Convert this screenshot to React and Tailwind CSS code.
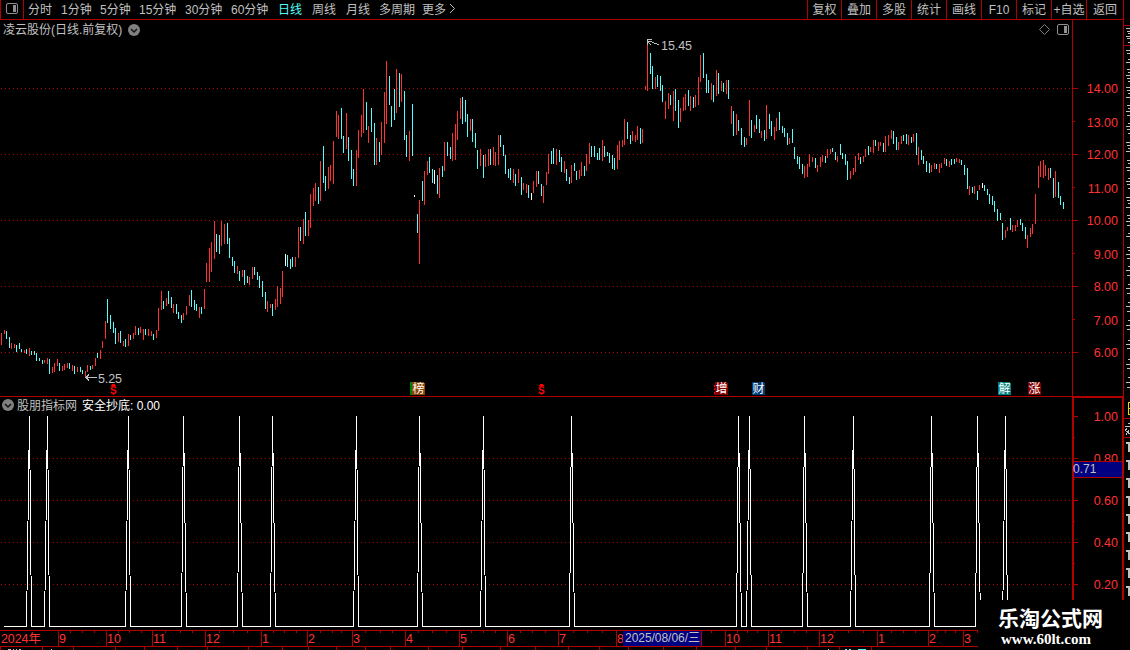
import React from "react";

const RED = "#b00000";

const COLORS = { r: "#ff3232", c: "#54fcfc", w: "#ffffff" };

// x, high, low, direction
const BARS = `1 333 345 r,4 330 334 r,6 331 339 c,9 337 348 c,11 343 349 r,14 344 348 r,16 345 352 c,19 343 349 c,21 349 352 c,24 350 353 r,26 349 354 c,29 348 356 r,31 351 355 c,34 351 355 c,36 353 361 c,39 358 361 c,42 360 364 c,44 360 363 r,47 358 364 r,49 359 374 c,52 367 373 r,54 363 372 r,57 359 366 r,59 363 371 c,62 366 371 r,64 364 370 r,67 363 368 r,69 363 369 c,72 365 371 r,74 366 374 c,77 367 372 r,80 367 372 c,82 370 374 c,85 371 377 r,87 365 372 r,90 366 370 c,92 365 369 r,95 358 366 r,97 353 358 c,100 350 359 r,102 341 348 r,105 321 339 r,107 299 323 c,110 315 329 c,113 322 333 c,115 328 344 c,118 333 342 r,120 331 343 c,123 341 346 r,125 339 347 c,128 334 346 r,130 335 340 c,133 333 339 r,135 326 335 r,138 328 335 c,140 327 333 r,143 329 340 r,145 329 335 c,148 329 336 r,151 331 336 r,153 334 340 c,156 330 338 r,158 308 331 r,161 291 310 r,163 301 309 c,166 298 306 r,168 291 304 c,171 297 308 c,173 304 313 r,176 304 314 c,178 312 319 c,181 315 323 c,183 313 320 r,186 306 315 r,189 295 306 r,191 290 307 c,194 300 310 c,196 304 311 c,199 307 318 r,201 307 314 c,204 289 309 r,206 263 282 r,209 248 282 r,211 242 272 r,214 221 259 r,216 234 252 c,219 235 254 c,221 221 246 r,224 224 244 r,227 223 244 c,229 238 258 c,232 257 266 c,234 261 273 c,237 266 274 r,239 271 281 c,242 270 277 r,244 270 285 c,247 276 283 c,249 277 285 r,252 267 279 r,254 267 275 c,257 272 280 c,259 276 288 c,262 281 297 c,265 292 309 c,267 301 312 r,270 304 308 r,272 304 316 c,275 299 310 r,277 286 307 r,280 288 304 r,282 271 297 r,285 254 266 w,287 255 267 c,290 259 269 c,292 257 267 c,295 257 267 r,298 227 258 r,300 227 241 c,303 219 244 r,305 212 236 c,308 220 236 r,310 194 228 r,313 188 206 r,315 183 201 r,318 187 204 c,320 161 201 r,323 146 183 c,325 176 191 c,328 167 189 r,330 165 181 r,333 141 184 r,336 111 137 r,338 115 139 r,341 108 139 c,343 136 153 c,346 113 149 r,348 137 161 c,351 150 179 c,353 169 186 c,356 150 186 r,358 130 158 r,361 115 137 r,363 89 133 r,366 102 130 c,368 126 143 r,371 108 132 c,374 123 165 c,376 138 165 r,379 142 162 c,381 122 155 r,384 92 143 r,386 61 124 r,389 76 105 c,391 106 127 c,394 89 120 c,396 69 113 r,399 73 107 c,401 74 102 r,404 91 140 c,406 135 157 c,409 131 161 r,412 104 156 c,414 195 197 w,417 214 233 c,419 200 264 r,422 181 201 c,424 171 205 r,427 161 175 r,429 157 173 c,432 169 183 c,434 170 184 w,437 175 194 c,439 168 198 r,442 166 177 c,444 142 171 r,447 142 156 c,450 147 159 c,452 133 161 r,455 124 160 r,457 111 140 r,460 98 119 r,462 97 124 c,465 100 122 c,467 114 137 c,470 119 131 r,472 119 142 c,475 133 148 c,477 150 169 c,480 149 166 r,483 155 178 c,485 154 167 r,488 149 166 r,490 149 165 c,493 147 165 r,495 152 166 r,498 135 165 r,500 135 147 c,503 145 156 c,505 155 174 c,508 169 178 c,510 168 180 c,513 169 183 r,515 174 186 c,518 169 183 r,521 177 195 c,523 183 190 r,526 184 193 r,528 185 198 c,531 193 200 w,533 181 193 r,536 171 187 r,538 171 184 c,541 184 196 c,543 186 203 r,546 172 185 r,548 154 174 r,551 151 164 c,553 148 164 c,556 149 165 r,559 150 162 c,561 157 172 c,564 161 173 r,566 169 181 c,569 177 184 c,571 165 183 r,574 163 171 c,576 171 180 c,579 170 179 r,581 162 176 r,584 166 176 c,586 154 171 r,589 143 164 r,591 146 157 c,594 146 157 c,597 153 160 c,599 148 160 c,602 140 161 r,604 146 157 c,607 152 156 c,609 153 163 c,612 155 169 c,614 158 170 c,617 145 169 r,619 141 160 r,622 140 147 r,624 119 145 r,627 122 139 c,630 135 144 c,632 131 141 r,635 135 142 r,637 126 140 r,640 128 144 c,642 129 143 r,645 86 90 r,647 43 91 r,650 53 74 c,652 66 89 c,655 77 89 r,657 75 87 c,660 76 91 c,662 85 102 c,665 101 119 r,668 93 109 r,670 95 105 c,673 91 121 r,675 89 111 c,678 100 128 c,680 108 122 r,683 97 111 r,685 94 110 r,688 90 106 c,690 96 111 r,693 97 108 c,695 95 107 r,698 77 105 r,700 55 82 r,703 53 78 c,706 74 93 c,708 80 93 c,711 83 100 r,713 85 102 c,716 70 96 r,718 73 94 c,721 81 91 r,723 83 92 c,726 80 94 r,728 80 99 c,731 106 124 r,733 111 136 c,736 114 135 r,738 120 131 c,741 128 145 c,744 137 147 c,746 138 145 r,749 100 136 r,751 120 138 c,754 125 132 r,756 115 129 c,759 119 133 c,761 131 138 r,764 130 141 c,766 105 139 r,769 114 129 c,771 121 136 c,774 127 140 r,776 118 131 r,779 112 130 c,782 126 133 c,784 128 137 c,787 133 145 c,789 138 144 r,792 129 143 c,794 147 159 c,797 156 164 c,799 157 169 c,802 164 174 c,804 166 178 r,807 164 177 r,809 154 167 r,812 157 162 r,815 158 168 c,817 165 172 r,820 157 167 r,822 155 162 r,825 156 163 c,827 149 158 r,830 149 154 r,832 148 152 c,835 152 160 c,837 156 162 r,840 144 155 c,842 153 159 c,845 154 165 c,847 161 180 c,850 171 179 r,853 168 175 r,855 156 172 r,858 153 160 r,860 157 164 c,863 156 162 r,865 149 157 r,868 146 155 c,870 147 152 r,873 140 153 r,875 140 146 c,878 142 151 r,880 142 146 r,883 143 152 c,885 136 152 r,888 135 146 r,891 130 139 r,893 131 144 c,896 137 150 c,898 142 150 r,901 136 144 r,903 135 141 c,906 134 144 c,908 135 145 r,911 137 143 c,913 134 142 r,916 133 155 c,918 147 165 r,921 150 160 c,923 156 164 c,926 161 172 c,929 163 173 c,931 165 172 r,934 163 169 r,936 164 169 c,939 164 173 r,941 163 168 r,944 158 164 r,946 159 166 c,949 161 167 r,951 159 165 c,954 159 164 c,956 158 162 r,959 159 163 r,961 160 165 c,964 165 175 c,967 168 189 c,969 186 195 r,972 187 193 c,974 186 194 r,977 191 200 c,979 185 190 r,982 183 188 w,984 185 191 c,987 189 195 c,989 194 204 c,992 196 205 c,994 201 212 c,997 209 221 c,1000 213 220 c,1002 223 240 c,1005 230 238 r,1007 227 231 r,1010 218 230 c,1012 225 232 r,1015 225 231 r,1017 220 227 r,1020 219 225 c,1022 223 231 c,1025 227 239 c,1027 235 248 r,1030 228 237 r,1032 224 234 r,1035 194 224 r,1038 166 188 r,1040 161 177 r,1043 160 178 r,1045 165 176 r,1048 168 180 r,1050 168 178 c,1053 178 198 c,1055 171 197 r,1058 182 198 c,1060 196 205 c,1063 202 209 c`
  .split(",")
  .map((row) => row.split(" "));

const PERIODS = [
  { label: "分时", cls: "w-[33px]" },
  { label: "1分钟", cls: "w-[39px]" },
  { label: "5分钟", cls: "w-[39px]" },
  { label: "15分钟", cls: "w-[46px]" },
  { label: "30分钟", cls: "w-[46px]" },
  { label: "60分钟", cls: "w-[47px]" },
  { label: "日线", cls: "w-[34px] text-[#54fcfc]" },
  { label: "周线", cls: "w-[34px]" },
  { label: "月线", cls: "w-[33px]" },
  { label: "多周期", cls: "w-[43px]" },
  { label: "更多", cls: "w-[27px]" },
];

const TOOLS = [
  { label: "复权", cls: "w-[34px]" },
  { label: "叠加", cls: "w-[35px]" },
  { label: "多股", cls: "w-[35px]" },
  { label: "统计", cls: "w-[35px]" },
  { label: "画线", cls: "w-[35px]" },
  { label: "F10", cls: "w-[35px]" },
  { label: "标记", cls: "w-[35px]" },
  { label: "+自选", cls: "w-[35px]" },
  { label: "返回", cls: "w-[37px]" },
];

const PRICES = [14, 13, 12, 11, 10, 9, 8, 7, 6];
const LEVELS = ["1.00", "0.80", "0.60", "0.40", "0.20"];

// left foot, peak, right foot of every signal
const SIGNALS = [
  [26, 29, 31], [44, 47, 49], [125, 128, 130], [181, 183, 186], [237, 239, 242],
  [270, 272, 275], [353, 356, 358], [417, 419, 422], [480, 483, 485], [569, 571, 574],
  [736, 738, 741], [746, 749, 751], [802, 804, 807], [850, 853, 855], [929, 931, 934],
  [975, 977, 980], [1002, 1005, 1007],
];

const MONTHS = [
  [58, "9"], [106, "10"], [152, "11"], [205, "12"], [261, "1"], [307, "2"], [352, "3"],
  [405, "4"], [459, "5"], [507, "6"], [558, "7"], [616, "8"], [725, "10"], [768, "11"],
  [819, "12"], [877, "1"], [928, "2"], [963, "3"],
];

const MINOR = [
  70, 82, 94, 118, 129, 141, 165, 180, 192, 219, 233, 247, 273, 284, 296, 320, 332, 341,
  365, 380, 392, 418, 432, 446, 471, 483, 495, 520, 532, 545, 573, 587, 602, 711, 737, 747, 757,
  781, 794, 806, 834, 848, 863, 891, 903, 915, 937, 945, 955, 977,
];

const LOWER_TICKS = [
  0, 42, 73, 115, 144, 177, 207, 248, 282, 308, 336, 365, 390, 428, 462, 500, 535, 568, 599,
  628, 663, 696, 735, 766, 807, 839, 871,
];

const BADGES = [
  [412, "榜", "#8a4600"],
  [715, "增", "#800000"],
  [752, "财", "#003c78"],
  [998, "解", "#008080"],
  [1028, "涨", "#800000"],
];

// strokes of the quote rows: y, start x
const EDGE_STROKES = [
  28, 31, 33, 36, 38, 42, 50, 53, 59, 62, 69, 72, 75, 78, 81, 87, 90, 93, 97, 105, 108, 111, 115,
  123, 126, 129, 133, 142, 145, 148, 151, 160, 163, 167, 170, 178, 181, 184, 188, 197, 200, 203,
  207, 215, 218, 221, 225, 233, 236, 247, 250, 254, 258, 266, 270, 275, 284, 288, 293, 302, 306,
  311, 320, 325, 329, 340, 344, 348, 359, 364, 368, 377, 382, 387,
];

function Grid({ rows }) {
  return rows.map((y) => (
    <line key={y} x1="1" x2="1072" y1={y + 0.5} y2={y + 0.5} stroke={RED} strokeDasharray="1 3" />
  ));
}

function Chevron() {
  return (
    <svg width="12" height="12" viewBox="0 0 12 12">
      <circle cx="6" cy="6" r="6" fill="#808080" />
      <path d="M3 5l3 3 3-3" fill="none" stroke="#111" strokeWidth="1.5" />
    </svg>
  );
}

function PanelIcon() {
  return (
    <svg width="12" height="11" viewBox="0 0 12 11">
      <rect x="0.5" y="0.5" width="11" height="10" rx="1.5" fill="none" stroke="#909090" />
      <rect x="7" y="2" width="3" height="7" fill="#909090" />
    </svg>
  );
}

function Toolbar() {
  return (
    <header className="flex h-5 w-[1124px] shrink-0 border-b border-[#b00000] text-[12px] leading-[20px] whitespace-nowrap">
      <div className="flex w-6 shrink-0 items-center justify-center border-x border-[#b00000] pr-px pb-[2px]">
        <PanelIcon />
      </div>
      <nav className="flex flex-1 pl-1">
        {PERIODS.map((p) => (
          <span key={p.label} className={p.cls}>{p.label}</span>
        ))}
        <svg width="7" height="19" viewBox="0 0 7 19">
          <path d="M1 4l4.5 4.5L1 13" fill="none" stroke="#c0c0c0" />
        </svg>
      </nav>
      <nav className="flex">
        {TOOLS.map((t) => (
          <span key={t.label} className={`${t.cls} flex justify-center border-l border-[#b00000]`}>{t.label}</span>
        ))}
      </nav>
      <div className="w-px bg-[#b00000]" />
    </header>
  );
}

function Dollar({ x }) {
  return (
    <g fill="#ff0000">
      <path d={`M${x - 2} 386h5v-1h-1v-1h-3v1h-1zM${x} 386h1v1h-1zM${x} 394h1v1h-1z`} />
      <text x={x - 3} y="394" fontSize="10" fontWeight="bold">S</text>
    </g>
  );
}

function PricePane() {
  return (
    <section className="relative h-[377px]">
      <svg width="1124" height="377" viewBox="0 20 1124 377" className="block" shapeRendering="crispEdges">
        <Grid rows={[88, 154, 220, 286, 352]} />
        {BARS.map(([x, top, bottom, c]) => (
          <rect key={x} x={x} y={top} width="1" height={bottom - top} fill={COLORS[c]} />
        ))}

        <g fill="none" stroke="#c0c0c0">
          <path d="M85 377.5h12M89 374.5l-3 3 3 3" />
          <path d="M647.5 45v-5.5h4M648 41.5l4 .5 7 3M648 42l3 3" />
        </g>
        <g fill="#c0c0c0" fontSize="12.5">
          <text x="98" y="383" textLength="24">5.25</text>
          <text x="661" y="50" textLength="31">15.45</text>
        </g>

        <Dollar x={113} />
        <Dollar x={541} />
        <path d="M714 385h1v2h-1zM714 388h1v2h-1zM714 392h1v2h-1z" fill="#ff0000" />
        <rect x="410" y="382" width="3" height="13" fill="#008000" />
        {BADGES.map(([x, label, fill]) => (
          <g key={label}>
            <path d={`M${x} 382h12v1h1v12h-13z`} fill={fill} />
            <text x={x + 0.5} y="393" fontSize="12" fill="#fff">{label}</text>
          </g>
        ))}

        <path d="M0 396.5H1124M1072.5 20V397M1123.5 20V397" stroke={RED} />
        {PRICES.map((p, i) => (
          <g key={p}>
            <rect x="1073" y={88 + i * 33} width={i % 2 ? 2 : 5} height="1" fill={RED} />
            <text x="1118" y={93 + i * 33 + (i % 2)} textAnchor="end" fontSize="12.5" fill="#ff3232">{p.toFixed(2)}</text>
          </g>
        ))}
      </svg>
      <div className="absolute top-[1px] left-[3px] flex h-[18px] items-center gap-[6px] text-[12px]">
        <span>凌云股份(日线.前复权)</span>
        <Chevron />
      </div>
      <div className="absolute top-[4px] left-[1039px] flex items-center gap-[7px]">
        <svg width="11" height="11" viewBox="0 0 11 11">
          <path d="M5.5.5l5 5-5 5-5-5z" fill="none" stroke="#808080" />
        </svg>
        <PanelIcon />
      </div>
    </section>
  );
}

function SignalPane() {
  const line = SIGNALS.filter(([l]) => l < 1000)
    .map(([l, x, r]) => `L${l + 0.5} 626.5L${x + 0.5} 416L${r + 0.5} 626.5`)
    .join("");
  return (
    <section className="relative h-[233px]">
      <svg width="1124" height="233" viewBox="0 397 1124 233" className="block" shapeRendering="crispEdges">
        <Grid rows={[458, 500, 542, 584]} />
        <path d={`M4 626.5${line}L1002.5 626.5L1005.5 416L1007.5 626.5`} fill="none" stroke="#fff" strokeLinejoin="bevel" />
        <path d="M1072 397.5H1124" stroke={RED} />
        <path d="M1073 397V600M1123 397V600" stroke={RED} strokeWidth="2" />
        {LEVELS.map((v, i) => (
          <g key={v}>
            <rect x="1074" y={416 + i * 42} width="4" height="1" fill={RED} />
            <rect x="1074" y={437 + i * 42} width="1" height="1" fill={RED} />
            <text x="1118" y={421 + i * 42} textAnchor="end" fontSize="12.5" fill="#ff3232">{v}</text>
          </g>
        ))}
        <rect x="1074" y="461.5" width="48" height="16" fill="#000080" />
        <path d="M1073 461.5h50M1073 477.5h50" stroke={RED} />
        <text x="1073" y="473" fontSize="12" fill="#c0c0c0">0.71</text>
      </svg>
      <div className="absolute top-0 left-[2px] flex h-4 items-center text-[12px]">
        <Chevron />
        <span className="mt-px ml-[3px]">股朋指标网</span>
        <span className="mt-px ml-[5px] text-white">安全抄底: 0.00</span>
      </div>
    </section>
  );
}

function Timeline() {
  return (
    <svg width="1124" height="20" viewBox="0 630 1124 20" className="block" shapeRendering="crispEdges">
      <path d="M0 630.5H1124M0 646.5H1124" stroke={RED} />
      {MINOR.map((x) => (
        <rect key={x} x={x} y="631" width="1" height="2" fill={RED} />
      ))}
      {LOWER_TICKS.map((x) => (
        <rect key={x} x={x} y="647" width="1" height="3" fill={RED} />
      ))}
      <g fill="#ff3232" fontSize="12.5">
        <text x="1" y="643" textLength="40">2024年</text>
        {MONTHS.map(([x, label]) => (
          <g key={x}>
            <rect x={x} y="631" width="1" height="15" fill={RED} />
            <text x={x + 1} y="643">{label}</text>
          </g>
        ))}
      </g>
      <rect x="623" y="631" width="79" height="15" fill="#000080" stroke="none" />
      <rect x="701" y="631" width="1" height="15" fill={RED} />
      <text x="625" y="642" fontSize="12" fill="#c0c0c0" textLength="75">2025/08/06/三</text>
      <path d="M8 649.5h3M13 649.5h1M16 649.5h1M19 649.5h2M51 649.5h1M828 649.5h1" stroke="#c0c0c0" />
      <path d="M845 649.5h2M849 649.5h2M858 649.5h8" stroke="#54fcfc" />
    </svg>
  );
}

// Sliver of the quote list that runs off the right edge
function QuoteEdge() {
  return (
    <aside className="h-full w-1.5 overflow-hidden">
      <svg width="6" height="650" viewBox="1124 0 6 650" shapeRendering="crispEdges">
        <path d="M1124 25.5h6M1124 45.5h6M1124 418.5h6M1124 437.5h6" stroke={RED} />
        {EDGE_STROKES.map((y, i) => (
          <rect key={y} x={1126 + (i % 3)} y={y} width="4" height="1" fill="#c0c0c0" />
        ))}
        <path d="M1128 423.5h2M1125 426.5h5M1127 428l-2 3M1126 431l4 3M1129 430l-3 5" fill="none" stroke="#c0c0c0" />
        {[442, 460, 478, 496, 514, 532, 550, 568, 586].map((y) => (
          <path key={y} d={`M1126 ${y}h4v10h-2v-8h-2z`} fill="#c0c0c0" />
        ))}
        <path d="M1130 402.5h-1.5v12h1.5M1128 408.5h2" fill="none" stroke="#e0e000" />
      </svg>
    </aside>
  );
}

export default function App() {
  return (
    <div className="relative flex h-[650px] w-[1130px] overflow-hidden bg-black font-['Liberation_Sans','Noto_Sans_CJK_SC',sans-serif] text-[#c0c0c0]">
      <main className="flex w-[1124px] shrink-0 flex-col">
        <Toolbar />
        <PricePane />
        <SignalPane />
        <Timeline />
      </main>
      <QuoteEdge />
      <div className="absolute right-0 bottom-0 flex h-[50px] w-[152px] flex-col bg-black pl-5 text-white">
        <span className="mt-[7px] text-[21px] leading-[24px] font-bold">乐淘公式网</span>
        <span className="pl-[3px] font-['Liberation_Serif',serif] text-[15px] leading-[16px] font-bold">www.60lt.com</span>
      </div>
    </div>
  );
}
